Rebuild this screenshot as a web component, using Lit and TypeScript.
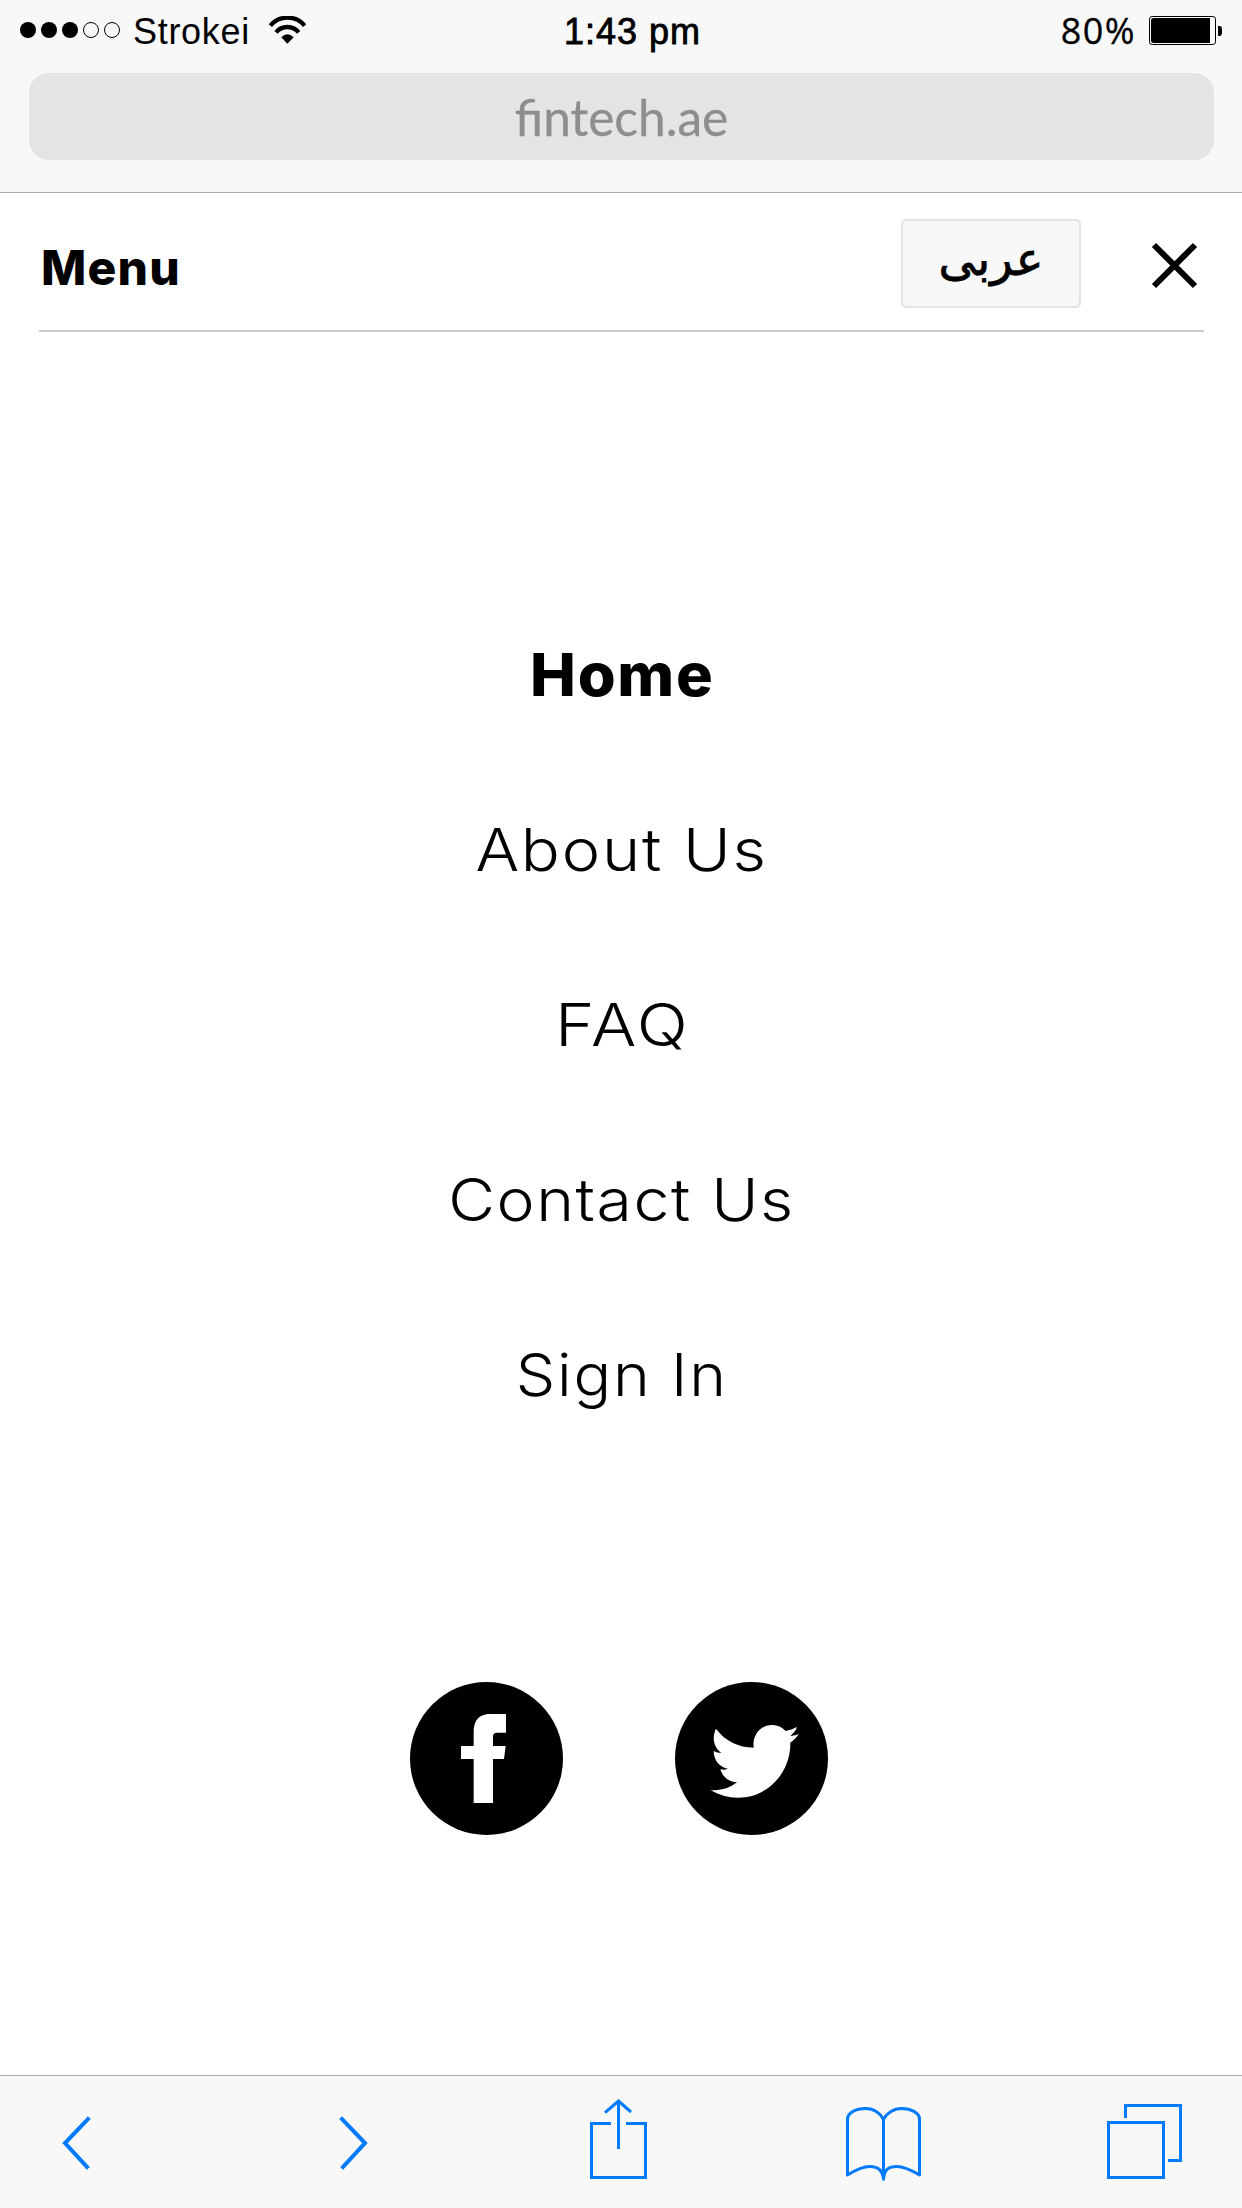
import { LitElement, html, css, svg } from "lit";
import { customElement } from "lit/decorators.js";

@customElement("status-bar")
class StatusBar extends LitElement {
  static styles = css`
    :host { display: flex; height: 73px; color: #000; font: 36px/44px "Liberation Sans", Arial, sans-serif; }
    svg { display: block; flex: none; }
    span { white-space: nowrap; flex: none; }
    .signal { margin: 22px 0 0 20px; }
    .carrier { margin: 10px 0 0 13px; width: 116px; letter-spacing: 0.7px; }
    .wifi { margin: 16px 0 0 20px; }
    .time { margin: 10px 0 0 258px; width: 144px; letter-spacing: 1px; -webkit-text-stroke: 0.8px #000; }
    .charge { margin: 9px 0 0 auto; font-family: "Open Sans", "Noto Sans", sans-serif; letter-spacing: 1.4px; -webkit-text-stroke: 0.3px #000; }
    .battery { margin: 16px 20px 0 13px; }
  `;
  render() {
    return html`
      <svg class="signal" width="100" height="16" viewBox="0 0 100 16">
        ${[8, 29, 50].map((x) => svg`<circle cx=${x} cy="8" r="8"/>`)}
        ${[71, 92].map((x) => svg`<circle cx=${x} cy="8" r="7.5" fill="none" stroke="#000"/>`)}
      </svg>
      <span class="carrier">Strokei</span>
      <svg class="wifi" width="37" height="28" viewBox="807 48 111 84">
        <g fill="none" stroke="#000" stroke-width="13">
          <path d="M811 77A67 67 0 0 1 914 77"/>
          <path d="M828 97A44 44 0 0 1 896 97"/>
        </g>
        <path d="M844 112Q862 94 881 112L862 131Z"/>
      </svg>
      <span class="time">1:43 pm</span>
      <span class="charge">80%</span>
      <svg class="battery" width="73" height="29" viewBox="963 48 219 87">
        <rect x="964.5" y="49.5" width="198" height="84" rx="8" fill="none" stroke="#000" stroke-width="3"/>
        <path d="M1146 54H977Q969 54 969 62V121Q969 129 977 129H1146Z"/>
        <path d="M1170 78H1176Q1182 79 1182 87V99Q1182 107 1176 108H1170Z"/>
      </svg>
    `;
  }
}

@customElement("tool-bar")
class ToolBar extends LitElement {
  static styles = css`
    :host { display: flex; height: 132px; padding-left: 62px; background: #f8f8f8; border-top: 1px solid #aaa; }
    svg { display: block; flex: none; fill: none; stroke: #007aff; stroke-width: 9; }
    .chevron { stroke-width: 12; }
    .forward { margin-left: 248px; }
    .share { margin-left: 222px; }
    .book { margin-left: 199px; }
    .tabs { margin-left: 186px; }
  `;
  render() {
    return html`
      <svg class="chevron" width="29" height="132" viewBox="186 48 87 396"><path d="M268 173L195 249L265 325"/></svg>
      <svg class="chevron forward" width="29" height="132" viewBox="1017 48 87 396"><path d="M1022 173L1095 249L1025 325"/></svg>
      <svg class="share" width="57" height="132" viewBox="150 48 171 396">
        <path d="M213 190.5H154.5V352.5H316.5V190.5H258M235.5 267V123M195 158L235.5 123L273 156"/>
      </svg>
      <svg class="book" width="75" height="132" viewBox="918 48 225 396">
        <path d="M1030.5 350V178C1022 160 1002 145.500 977 145.500C948 145.500 922.500 158 922.500 178V345C945 331 968 319.500 990 319.500C1012 319.500 1028 328 1030.500 358C1033 328 1046 319.500 1070 319.500C1092 319.500 1115 331 1138.500 345V178C1138.500 158 1112 145.500 1085 145.500C1060 145.500 1039 160 1030.500 178" stroke-linejoin="round"/>
      </svg>
      <svg class="tabs" width="75" height="132" viewBox="195 48 225 396">
        <path d="M199.500 187.500H364.500V352.500H199.500ZM250.500 174V136.500H415.500V301.500H378"/>
      </svg>
    `;
  }
}

const links = [
  { label: "Home", style: "item current" },
  { label: "About Us", style: "item about" },
  { label: "FAQ", style: "item faq" },
  { label: "Contact Us", style: "item contact" },
  { label: "Sign In", style: "item" },
];

@customElement("app-root")
class AppRoot extends LitElement {
  static styles = css`
    :host { display: flex; flex-direction: column; box-sizing: border-box; width: 1242px; height: 2208px; background: #fff; color: #000; font-family: Inter, "Open Sans", sans-serif; overflow: hidden; }
    .chrome { flex: none; height: 192px; background: #f8f8f8; border-bottom: 1px solid #aaa; }
    .address { margin: 0 28px 0 29px; height: 87px; border-radius: 20px; background: #e4e4e6; color: #8e8e8e; font: 49.6px/88px Lato, "Open Sans", sans-serif; -webkit-text-stroke: 0.3px #8e8e8e; text-align: center; }
    .top { flex: none; display: flex; align-items: flex-start; box-sizing: border-box; height: 139px; margin: 0 38px 0 39px; border-bottom: 2px solid #ccc; }
    .title { margin: 45px 0 0 2px; font-size: 48px; line-height: 60px; font-weight: 800; letter-spacing: 1.2px; }
    .lang { margin: 26px 0 0 auto; box-sizing: border-box; width: 180px; height: 89px; border: 2px solid #e4e4e4; border-radius: 5px; background: #f8f8f8; font: 46.500px/77px "DejaVu Sans", sans-serif; -webkit-text-stroke: 0.8px #000; text-align: center; }
    .close { margin: 50px 7px 0 71px; overflow: visible; }
    .nav { display: flex; flex-direction: column; align-items: center; margin-top: 255px; }
    .item { --track: 1.7px; --stretch: 1.06; height: 175px; line-height: 175px; font-size: 59px; font-weight: 300; letter-spacing: var(--track); padding-left: var(--track); white-space: nowrap; transform: scaleX(var(--stretch)); }
    .current { --track: 1.6px; --stretch: 1.04; font-weight: 800; }
    .about { --track: 1.6px; --stretch: 1.1; }
    .faq { --track: 2.2px; --stretch: 1.14; }
    .contact { --track: 1.4px; --stretch: 1.09; }
    .social { display: flex; gap: 112px; margin: 220px 0 0 410px; }
    svg { display: block; flex: none; }
    tool-bar { margin-top: auto; }
  `;
  render() {
    return html`
      <header class="chrome">
        <status-bar></status-bar>
        <div class="address">fintech.ae</div>
      </header>
      <div class="top">
        <div class="title">Menu</div>
        <div class="lang" lang="ar" dir="rtl">عربى</div>
        <svg class="close" width="45" height="45" viewBox="0 0 45 45" fill="none" stroke="#000" stroke-width="6"><path d="M2 2L43 43M43 2L2 43"/></svg>
      </div>
      <nav class="nav">
        ${links.map((link) => html`<a class=${link.style}>${link.label}</a>`)}
      </nav>
      <div class="social">
        <svg width="153" height="153" viewBox="30 66 459 459">
          <circle cx="259.5" cy="295.5" r="229.5"/>
          <path fill="#fff" d="M221 429V297H183V258H221V215C221 181 238 162 270 162H318V218H290Q279 218 279 230V258H317L312 297H279V429Z"/>
        </svg>
        <svg width="153" height="153" viewBox="825 66 459 459">
          <circle cx="1054.5" cy="295.5" r="229.5"/>
          <path fill="#fff" d="M948 206C975 243 1015 262 1061 263C1056 225 1082 195 1116 195C1132 195 1147 202 1157 213C1168 211 1180 207 1191 201C1188 211 1181 220 1171 227C1180 227 1188 225 1197 221C1190 231 1181 241 1171 248C1173 330 1110 413 1014 413C984 413 956 405 932 390C960 393 988 385 1011 367C987 366 967 351 961 328C969 330 976 330 984 326C958 322 941 300 941 273C948 277 956 279 964 279C941 263 935 232 948 206Z"/>
        </svg>
      </div>
      <tool-bar></tool-bar>
    `;
  }
}
